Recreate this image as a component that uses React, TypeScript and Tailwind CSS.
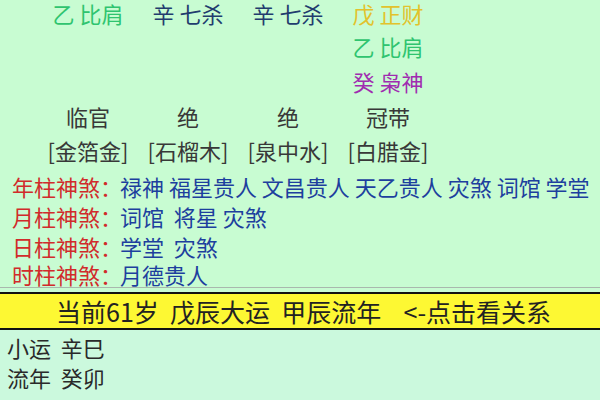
import React from "react";

const font = { fontFamily: '"Noto Sans CJK SC", "Noto Sans", sans-serif' };

function Cell({ children, className = "" }: { children?: React.ReactNode; className?: string }) {
  return <div className={`w-[100px] flex items-center justify-center whitespace-pre ${className}`}>{children}</div>;
}

const shensha: { label: string; value: string }[] = [
  { label: "年柱神煞：", value: "禄神 福星贵人 文昌贵人 天乙贵人 灾煞 词馆 学堂" },
  { label: "月柱神煞：", value: "词馆  将星 灾煞" },
  { label: "日柱神煞：", value: "学堂  灾煞" },
  { label: "时柱神煞：", value: "月德贵人" },
];

export default function App() {
  return (
    <div className="w-[600px] h-[400px] overflow-hidden bg-[#c8fcd2] text-[22px] leading-none" style={font}>
      <div className="pl-[38px] flex flex-col">
        <div className="flex h-[26px]">
          <Cell className="text-[#2fc46f]">乙 比肩</Cell>
          <Cell className="text-[#223c6e]">辛 七杀</Cell>
          <Cell className="text-[#223c6e]">辛 七杀</Cell>
          <Cell className="text-[#e2c22c]">戊 正财</Cell>
        </div>
        <div className="flex h-[40px]">
          <Cell />
          <Cell />
          <Cell />
          <Cell className="text-[#2fc46f]">乙 比肩</Cell>
        </div>
        <div className="flex h-[30px]">
          <Cell />
          <Cell />
          <Cell />
          <Cell className="text-[#a02cb0]">癸 枭神</Cell>
        </div>
        <div className="flex h-[40px] text-[#383838]">
          <Cell>临官</Cell>
          <Cell>绝</Cell>
          <Cell>绝</Cell>
          <Cell>冠带</Cell>
        </div>
        <div className="flex h-[28px] text-[#383838]">
          <Cell>[金箔金]</Cell>
          <Cell>[石榴木]</Cell>
          <Cell>[泉中水]</Cell>
          <Cell>[白腊金]</Cell>
        </div>
      </div>
      <div className="pt-[7px] pl-[12px] flex flex-col">
        {shensha.map((s, i) => (
          <div key={i} className={`flex items-center whitespace-pre ${i === 3 ? "h-[26px]" : "h-[30px]"}`}>
            <span className="text-[#d12b2b] w-[108px]">{s.label}</span>
            <span className="text-[#1d3f9e]">{s.value}</span>
          </div>
        ))}
      </div>
      <div className="h-px bg-[#a9b8ad]" />
      <div className="h-[4px]" />
      <div className="bg-[#cbf9dd] flex flex-col">
        <div className="h-[38px] bg-[#fdf833] border-y-2 border-[#111] flex items-center pl-[56px] text-[25px] text-[#222] whitespace-pre">
          当前61岁  戊辰大运  甲辰流年    &lt;-点击看关系
        </div>
        <div className="pl-[7px] pt-[2px] text-[#2a2a2a] flex flex-col">
          <div className="h-[30px] flex items-center whitespace-pre">小运  辛巳</div>
          <div className="h-[30px] flex items-center whitespace-pre">流年  癸卯</div>
          <div className="h-[20px]" />
        </div>
      </div>
    </div>
  );
}
